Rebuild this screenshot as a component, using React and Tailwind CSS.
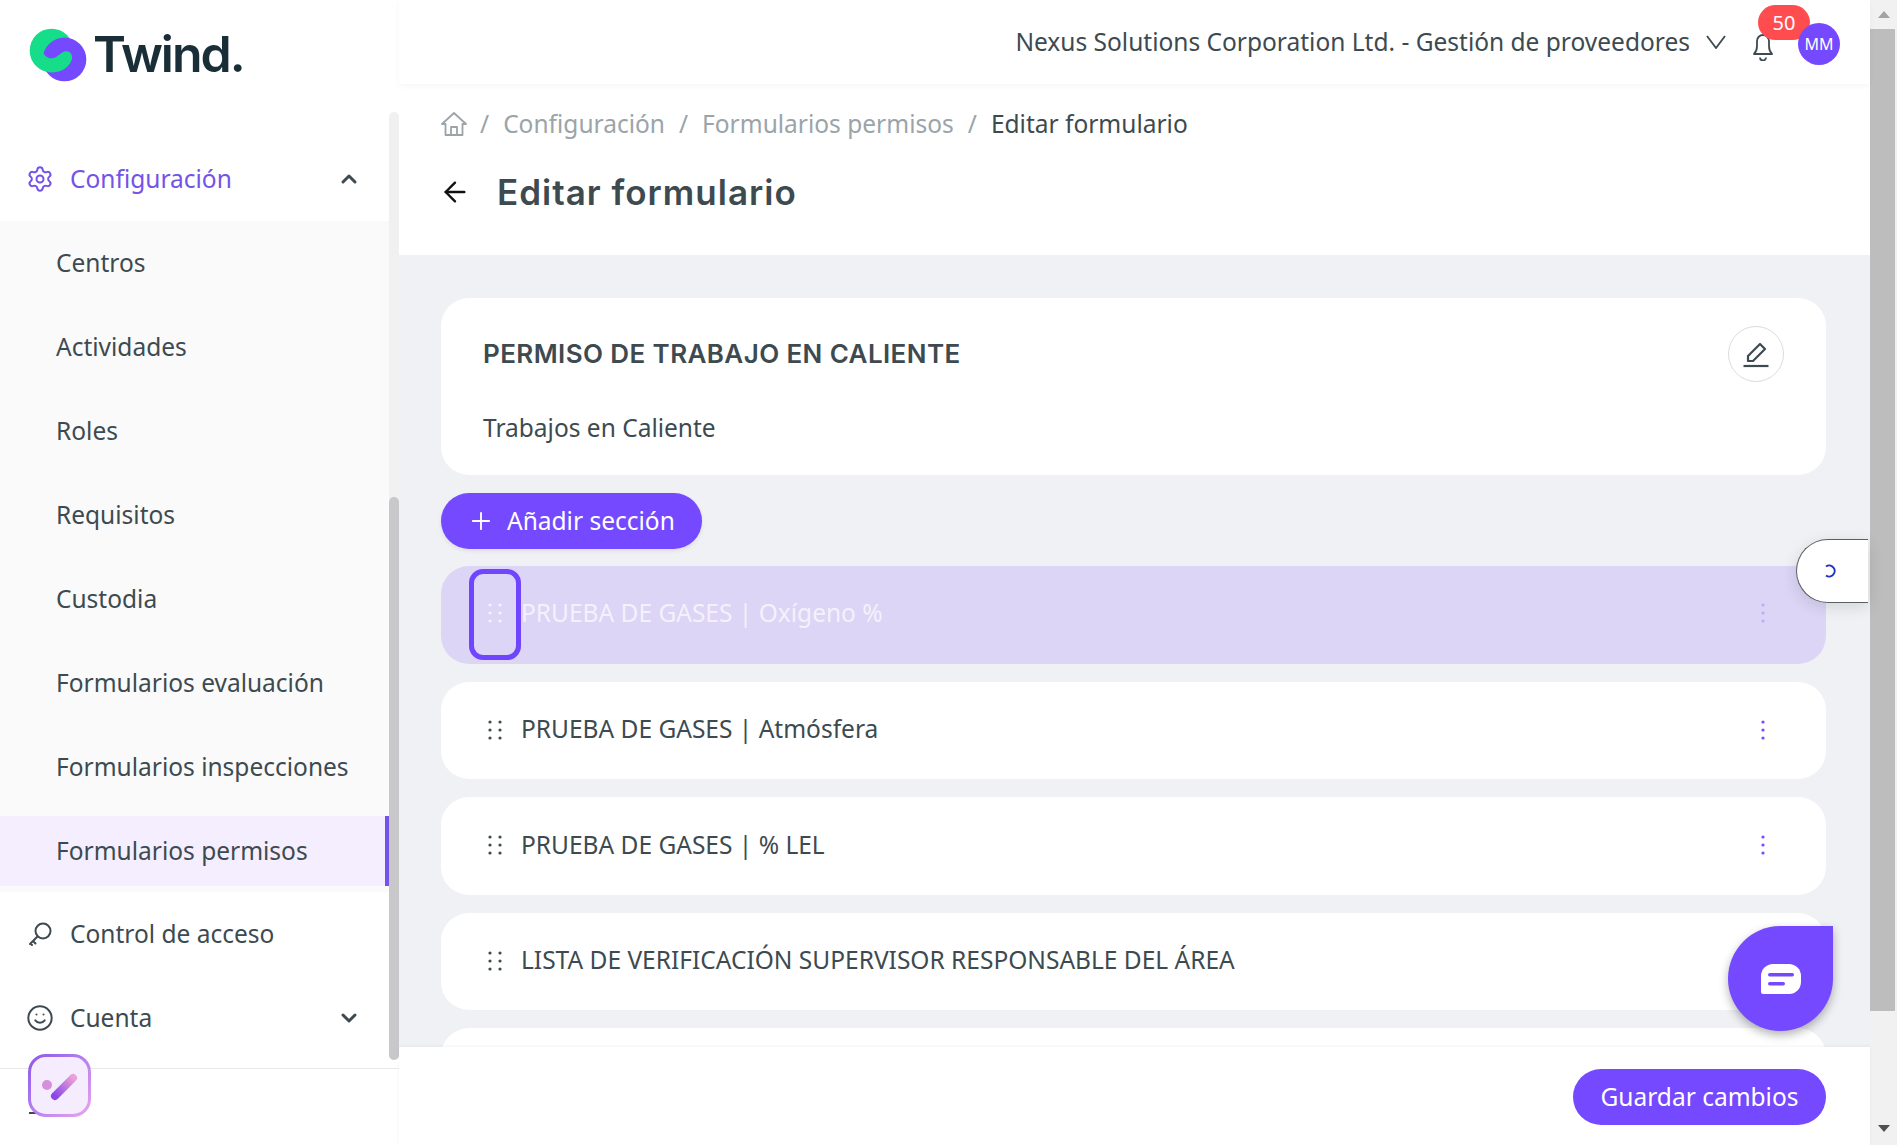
import { ArrowLeft, Plus, Settings, ChevronUp, ChevronDown, Smile } from 'lucide-react';

const subItems = [
  'Centros',
  'Actividades',
  'Roles',
  'Requisitos',
  'Custodia',
  'Formularios evaluación',
  'Formularios inspecciones',
];

const rows = [
  'PRUEBA DE GASES | Atmósfera',
  'PRUEBA DE GASES | % LEL',
  'LISTA DE VERIFICACIÓN SUPERVISOR RESPONSABLE DEL ÁREA',
];

const headingFont = { fontFamily: 'Inter, sans-serif' };

const Logo = () => (
  <div className="flex items-start">
    <svg width="58" height="54" viewBox="28 25 175 163" className="shrink-0">
      <circle cx="96" cy="93" r="66" fill="#16dd8a" />
      <circle cx="135" cy="120" r="66" fill="#7549ff" />
      <path
        d="M70 95C72 108 85 118 100 116C115 114 122 100 135 96C150 92 160 104 158 118C150 145 125 160 96 159C85 159 75 155 60 145Z"
        fill="#16dd8a"
      />
    </svg>
    <span className="ml-[6px] mt-[-4px] text-[50px] font-semibold leading-[60px] tracking-[-2px] text-[#1a2e38]" style={headingFont}>
      Twind.
    </span>
  </div>
);

const Dots = ({ className }) => (
  <svg width="14" height="20" viewBox="0 0 14 20" className={className} fill="currentColor">
    <circle cx="2" cy="2" r="1.6" />
    <circle cx="12" cy="2" r="1.6" />
    <circle cx="2" cy="10" r="1.6" />
    <circle cx="12" cy="10" r="1.6" />
    <circle cx="2" cy="18" r="1.6" />
    <circle cx="12" cy="18" r="1.6" />
  </svg>
);

const Kebab = ({ className }) => (
  <svg width="4" height="20" viewBox="0 0 4 20" className={className} fill="currentColor">
    <circle cx="2" cy="2" r="1.6" />
    <circle cx="2" cy="10" r="1.6" />
    <circle cx="2" cy="18" r="1.6" />
  </svg>
);

const KeyIcon = () => (
  <svg width="28" height="28" viewBox="0 0 28 28" fill="none" stroke="currentColor" strokeWidth="2" strokeLinecap="round" className="shrink-0">
    <circle cx="17" cy="11" r="7.5" />
    <path d="M11.5 16.5L4 24M7 21l2.5 2.5M4.5 23.5l1.5 1.5" />
  </svg>
);

const HomeIcon = () => (
  <svg width="26" height="26" viewBox="0 0 26 26" fill="none" stroke="currentColor" strokeWidth="1.8" strokeLinejoin="round" className="shrink-0">
    <path d="M1 13L13 2l12 11h-3.5v11h-17V13z" />
    <path d="M10 24v-8h6v8" />
  </svg>
);

const BellIcon = () => (
  <svg width="22" height="32" viewBox="0 0 22 32" fill="none" stroke="currentColor" strokeWidth="1.8" strokeLinejoin="round" className="shrink-0">
    <path d="M2 25c2-2 3-4 3-8v-5a6 6 0 0 1 12 0v5c0 4 1 6 3 8z" />
    <path d="M8 28.5a3 3 0 0 0 6 0" />
  </svg>
);

const Sidebar = () => (
  <aside className="relative flex h-full w-[399px] shrink-0 flex-col bg-white">
    <div className="flex h-[112px] shrink-0 items-start pl-[29px] pt-[28px]">
      <Logo />
    </div>
    <div className="flex h-[956px] shrink-0">
      <nav className="min-w-0 flex-1 overflow-hidden pt-[25px]">
        <div className="flex h-[84px] items-center pl-[26px] pr-[28px] text-[#7353e8]">
          <Settings size={28} strokeWidth={1.7} />
          <span className="ml-[16px] flex-1 text-[24.5px]">Configuración</span>
          <ChevronUp size={24} strokeWidth={3} className="text-[#3d4a50]" />
        </div>
        <div className="bg-[#fafafa] pb-[6px]">
          {subItems.map(item => (
            <div key={item} className="flex h-[84px] items-center pl-[56px] text-[24.5px] text-[#3d4a50]">
              {item}
            </div>
          ))}
          <div className="mt-[7px] flex h-[70px] items-center border-r-4 border-[#7353e8] bg-[#f5eefe] pl-[56px] text-[24.5px] text-[#3d4a50]">
            Formularios permisos
          </div>
        </div>
        <div className="flex h-[84px] items-center pl-[26px] text-[#3d4a50]">
          <KeyIcon />
          <span className="ml-[16px] text-[24.5px]">Control de acceso</span>
        </div>
        <div className="flex h-[84px] items-center pl-[26px] pr-[28px] text-[#3d4a50]">
          <Smile size={28} strokeWidth={1.7} />
          <span className="ml-[16px] flex-1 text-[24.5px]">Cuenta</span>
          <ChevronDown size={24} strokeWidth={3} />
        </div>
      </nav>
      <div className="mb-[8px] w-[10px] shrink-0 rounded-full bg-[#f0f0f0]">
        <div className="mt-[385px] h-[563px] rounded-full bg-[#c8c8ca]" />
      </div>
    </div>
    <div className="flex-1 border-t border-[#e8e8e8] pl-[29px] pt-[43px]">
      <div className="h-[2px] w-[8px] bg-[#3d4a50]" />
    </div>
    {/* Floating task widget */}
    <div className="absolute left-[28px] top-[1054px] h-[63px] w-[63px] rounded-[18px] bg-gradient-to-br from-[#8a55ea] to-[#eaa5f0] p-[3px]">
      <div className="flex h-full w-full items-center justify-center rounded-[15px] bg-[#f5ecfd]">
        <svg width="38" height="30" viewBox="0 0 38 30">
          <defs>
            <linearGradient id="tick" x1="0" y1="1" x2="1" y2="0">
              <stop offset="0" stopColor="#8a45ea" />
              <stop offset="1" stopColor="#eaa0d8" />
            </linearGradient>
          </defs>
          <circle cx="6" cy="14" r="5" fill="#d68fdc" />
          <path d="M14 25L32 7" stroke="url(#tick)" strokeWidth="8" strokeLinecap="round" />
        </svg>
      </div>
    </div>
  </aside>
);

const Header = () => (
  <header className="relative z-10 flex h-[84px] shrink-0 items-center justify-end bg-white pr-[30px] shadow-[0_2px_6px_rgba(0,0,0,0.04)]">
    <span className="text-[24.5px] text-[#3d4a50]">Nexus Solutions Corporation Ltd. - Gestión de proveedores</span>
    <svg width="20" height="14" viewBox="0 0 20 14" className="ml-[16px] text-[#3d4a50]" fill="none" stroke="currentColor" strokeWidth="1.8">
      <path d="M1 1l9 12 9-12" />
    </svg>
    <div className="ml-[26px] mt-[6px] text-[#3d4a50]">
      <BellIcon />
    </div>
    <div className="relative ml-[24px] mt-[4px] h-[42px] w-[42px]">
      <div className="absolute left-[-40px] top-[-18px] flex h-[35px] w-[52px] items-center justify-center rounded-[18px] bg-[#ff4d4f] text-[20px] text-white">
        50
      </div>
      <div className="absolute inset-0 flex items-center justify-center rounded-full bg-[#7549ff] text-[16px] text-white">MM</div>
    </div>
  </header>
);

const Row = ({ label }) => (
  <div className="flex h-[97.5px] shrink-0 items-center rounded-[28px] bg-white pb-[1px] pl-[47px] pr-[61px]">
    <Dots className="text-[#3d4a50]" />
    <span className="ml-[19px] flex-1 text-[24.5px] text-[#3d4a50]">{label}</span>
    <Kebab className="text-[#7549ff]" />
  </div>
);

const App = () => {
  return (
    <div className="flex h-[1145px] w-[1897px] overflow-hidden bg-white" style={{ fontFamily: '"Noto Sans", sans-serif' }}>
      <Sidebar />
      <main className="relative flex h-full min-w-0 flex-1 flex-col">
        <Header />
        <div className="flex h-[171px] shrink-0 flex-col bg-white pl-[42px]">
          <div className="mt-[23px] flex h-[34px] items-center text-[24.5px] text-[#9aa4a9]">
            <HomeIcon />
            <span className="ml-[13px]">/</span>
            <span className="ml-[14px]">Configuración</span>
            <span className="ml-[14px]">/</span>
            <span className="ml-[14px]">Formularios permisos</span>
            <span className="ml-[14px]">/</span>
            <span className="ml-[14px] text-[#3d4a50]">Editar formulario</span>
          </div>
          <div className="mt-[25px] flex items-center">
            <ArrowLeft size={32} strokeWidth={1.8} className="-ml-[2px] text-[#111]" />
            <h1 className="ml-[26px] text-[35px] font-semibold tracking-[1px] text-[#3d4a50]" style={headingFont}>
              Editar formulario
            </h1>
          </div>
        </div>

        <div className="flex min-h-0 flex-1 flex-col gap-[18px] overflow-hidden bg-[#f0f1f5] pl-[42px] pr-[44px] pt-[43px]">
          <section className="relative h-[177px] shrink-0 rounded-[28px] bg-white pl-[42px] pt-[36px]">
            <h2 className="text-[26px] font-semibold tracking-[0.4px] text-[#3d4a50]" style={headingFont}>
              PERMISO DE TRABAJO EN CALIENTE
            </h2>
            <p className="mt-[37px] text-[24.5px] text-[#3d4a50]">Trabajos en Caliente</p>
            <div className="absolute right-[42px] top-[28px] flex h-[56px] w-[56px] items-center justify-center rounded-full border border-[#dcdcdc] bg-white text-[#3d4a50]">
              <svg width="28" height="28" viewBox="0 0 28 28" fill="none" stroke="currentColor" strokeWidth="2.2" strokeLinejoin="round">
                <path d="M6 21v-5L18 4l5 5-12 12z" />
                <path d="M1.5 26h25" />
              </svg>
            </div>
          </section>

          <button className="flex h-[56px] w-[261px] shrink-0 items-center rounded-full bg-[#7549ff] pl-[26px] text-[24.5px] text-white shadow-[0_2px_4px_rgba(0,0,0,0.08)]">
            <Plus size={28} strokeWidth={1.6} />
            <span className="ml-[12px]">Añadir sección</span>
          </button>

          {/* Row being dragged */}
          <div className="relative -mt-[1px] flex h-[97.5px] shrink-0 items-center rounded-[28px] bg-[#dcd5f6] pb-[3px] pl-[47px] pr-[61px]">
            <Dots className="text-white/70" />
            <span className="ml-[19px] flex-1 text-[24.5px] text-white/70">PRUEBA DE GASES | Oxígeno %</span>
            <Kebab className="text-[#7549ff]/30" />
            <div className="absolute left-[28px] top-[3px] h-[91px] w-[52px] rounded-[14px] border-[5px] border-[#7045ff]" />
          </div>

          {rows.map(label => (
            <Row key={label} label={label} />
          ))}
          <div className="h-[97.5px] shrink-0 rounded-[28px] bg-white" />
        </div>

        <div className="relative z-10 flex h-[98px] shrink-0 items-start justify-end bg-white pr-[44px] pt-[22px] shadow-[0_-1px_3px_rgba(0,0,0,0.05)]">
          <button className="h-[56px] w-[253px] rounded-full bg-[#7549ff] text-[24.5px] text-white">Guardar cambios</button>
        </div>

        {/* Loading tab on the right edge */}
        <div className="absolute right-[2px] top-[539px] z-20 flex h-[64px] w-[72px] items-center rounded-l-[32px] border border-r-0 border-[#5a5f66] bg-white pl-[27px] shadow-[0_4px_16px_rgba(0,0,0,0.12)]">
          <svg width="14" height="14" viewBox="0 0 14 14" fill="none" stroke="#2233bb" strokeWidth="2">
            <path d="M2 2.5a5.5 5.5 0 1 1 0 9" />
          </svg>
        </div>

        {/* Chat button */}
        <div className="absolute left-[1329px] top-[926px] z-20 flex h-[105px] w-[105px] items-center justify-center rounded-full rounded-tr-[12px] bg-[#7549ff] shadow-[0_4px_10px_rgba(0,0,0,0.3)]">
          <svg width="40" height="30" viewBox="0 0 40 30">
            <path d="M12 0h16a12 12 0 0 1 12 12v6a12 12 0 0 1-12 12H2a2 2 0 0 1-2-2V12A12 12 0 0 1 12 0z" fill="#fff" />
            <rect x="7" y="9" width="26" height="3.5" rx="1.7" fill="#7549ff" />
            <rect x="7" y="18" width="17" height="3.5" rx="1.7" fill="#7549ff" />
          </svg>
        </div>
      </main>

      {/* Page scrollbar */}
      <div className="flex h-full w-[27px] shrink-0 flex-col items-center bg-[#f1f1f1]">
        <div className="flex h-[29px] w-full items-center justify-center">
          <div className="h-0 w-0 border-x-[6px] border-b-[7px] border-x-transparent border-b-[#a3a3a3]" />
        </div>
        <div className="mr-[2px] h-[982px] w-[25px] self-start bg-[#bdbdbd]" />
        <div className="flex flex-1 items-end justify-center pb-[13px]">
          <div className="h-0 w-0 border-x-[6px] border-t-[7px] border-x-transparent border-t-[#505050]" />
        </div>
      </div>
    </div>
  );
};

export default App;
